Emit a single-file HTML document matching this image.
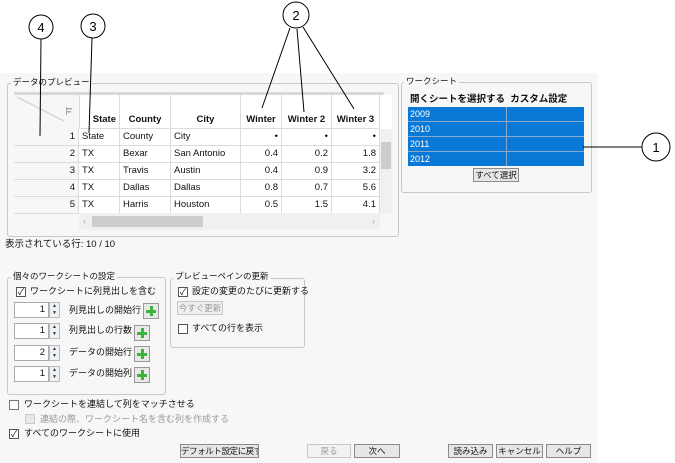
<!DOCTYPE html>
<html><head><meta charset="utf-8">
<style>
*{margin:0;padding:0;box-sizing:border-box}
body{width:675px;height:463px;background:#fff;position:relative;overflow:hidden;font-family:"Liberation Sans","Noto Sans CJK JP",sans-serif;font-size:9px;color:#111}
.a{position:absolute}
.dlg{left:0;top:73px;width:598px;height:390px;background:#f7f7f7}
.grp{position:absolute;border:1px solid #c8c8c8;border-radius:3px}
.lbl{position:absolute;background:#f7f7f7;padding:0 2px;font-size:8.5px;line-height:10px;white-space:nowrap}
.cell{position:absolute;border-right:1px solid #dcdcdc;border-bottom:1px solid #dcdcdc;font-size:9.5px;line-height:16px;padding:0 3px;white-space:nowrap;overflow:hidden}
.hd{font-weight:bold;font-size:9.5px}
.r{text-align:right}
.cb{position:absolute;width:10px;height:10px;border:1px solid #555;background:#fff;font-size:9px;line-height:8px;text-align:center}
.t{position:absolute;font-size:9px;white-space:nowrap;line-height:11px}
.btn{position:absolute;border:1px solid #8a8a8a;background:#e6e6e6;font-size:8.5px;text-align:center;line-height:12px;white-space:nowrap;overflow:hidden}
.spin{position:absolute;width:46px;height:16px}
.spin .in{position:absolute;left:0;top:0;width:35px;height:16px;border:1px solid #aaa;background:#fff;text-align:right;padding-right:3px;font-size:9.5px;line-height:14px}
.spin .ar{position:absolute;left:35px;top:0;width:11px;height:16px;border:1px solid #bbb;background:#eef1f6;font-size:5px;line-height:7px;text-align:center;color:#333}
.plus{position:absolute;width:16px;height:16px;border:1px solid #999;background:#e8e8e8}
.plus:before{content:"";position:absolute;left:6px;top:2px;width:3px;height:10px;background:#3cb43c}
.plus:after{content:"";position:absolute;left:2px;top:6px;width:10px;height:3px;background:#3cb43c}
</style></head><body>
<div class="a dlg"></div>

<div class="grp" style="left:7px;top:83px;width:392px;height:154px"></div>
<div class="lbl" style="left:11px;top:77px">データのプレビュー</div>
<div class="a" style="left:14px;top:92px;width:370px;height:3px;background:#d8d8d8"></div>
<div class="a" style="left:14px;top:95px;width:378px;height:118px;background:#fff"></div>
<div class="a" style="left:14px;top:95px;width:65px;height:118px;background:#f7f7f7"></div>
<svg class="a" style="left:14px;top:95px" width="65" height="34"><line x1="3" y1="2" x2="50" y2="26" stroke="#ccc"/><rect x="52" y="12" width="1" height="8" fill="#aaa"/><rect x="53" y="13" width="5" height="1.5" fill="#aaa"/><rect x="53" y="16" width="4" height="1.5" fill="#aaa"/></svg>
<div class="a" style="left:79px;top:95px;width:1px;height:34px;background:#dcdcdc"></div>
<div class="cell hd" style="left:79px;top:95px;width:41px;height:34px;line-height:50px;text-align:right">State</div>
<div class="cell hd" style="left:120px;top:95px;width:51px;height:34px;line-height:50px;text-align:center">County</div>
<div class="cell hd" style="left:171px;top:95px;width:70px;height:34px;line-height:50px;text-align:center">City</div>
<div class="cell hd" style="left:241px;top:95px;width:41px;height:34px;line-height:50px;padding:0 1px;text-align:center">Winter</div>
<div class="cell hd" style="left:282px;top:95px;width:50px;height:34px;line-height:50px;text-align:center">Winter 2</div>
<div class="cell hd" style="left:332px;top:95px;width:48px;height:34px;line-height:50px;padding:0 1px;text-align:center">Winter 3</div>
<div id="rows"></div>
<script>
var d=[["1","State","County","City","•","•","•"],["2","TX","Bexar","San Antonio","0.4","0.2","1.8"],["3","TX","Travis","Austin","0.4","0.9","3.2"],["4","TX","Dallas","Dallas","0.8","0.7","5.6"],["5","TX","Harris","Houston","0.5","1.5","4.1"]];
var xs=[14,79,120,171,241,282,332,380],h="";
d.forEach(function(r,i){var y=129+i*17;for(var c=0;c<7;c++){var w=xs[c+1]-xs[c];var cls="cell"+((c==0||c>=4)?" r":"");h+='<div class="'+cls+'" style="left:'+xs[c]+'px;top:'+y+'px;width:'+w+'px;height:17px">'+r[c]+'</div>';}});
document.getElementById("rows").innerHTML=h;
</script>
<div class="a" style="left:380px;top:129px;width:12px;height:84px;background:#f0f0f0"></div>
<div class="a" style="left:381px;top:142px;width:10px;height:27px;background:#cdcdcd"></div>
<div class="a" style="left:79px;top:213px;width:301px;height:17px;background:#f0f0f0"></div>
<div class="a" style="left:92px;top:216px;width:111px;height:11px;background:#cdcdcd"></div>
<div class="t" style="left:83px;top:216px;color:#aaa">‹</div>
<div class="t" style="left:372px;top:216px;color:#aaa">›</div>
<div class="t" style="left:5px;top:239px;font-size:9.5px">表示されている行: 10 / 10</div>

<div class="grp" style="left:401px;top:82px;width:191px;height:111px"></div>
<div class="lbl" style="left:404px;top:76px">ワークシート</div>
<div class="t" style="left:410px;top:94px;font-weight:bold;font-size:9.5px">開くシートを選択する&nbsp; カスタム設定</div>
<div class="a" style="left:408px;top:107px;width:176px;height:59px;background:#0a78d7"></div>
<div class="a" style="left:506px;top:107px;width:1px;height:59px;background:#8aa8c8"></div>
<div class="a" style="left:408px;top:121px;width:176px;height:1px;background:#8aa8c8"></div>
<div class="a" style="left:408px;top:136px;width:176px;height:1px;background:#8aa8c8"></div>
<div class="a" style="left:408px;top:151px;width:176px;height:1px;background:#8aa8c8"></div>
<div class="t" style="left:410px;top:109px;color:#fff">2009</div>
<div class="t" style="left:410px;top:124px;color:#fff">2010</div>
<div class="t" style="left:410px;top:139px;color:#fff">2011</div>
<div class="t" style="left:410px;top:154px;color:#fff">2012</div>
<div class="btn" style="left:473px;top:168px;width:46px;height:14px">すべて選択</div>

<div class="grp" style="left:7px;top:277px;width:159px;height:118px"></div>
<div class="lbl" style="left:11px;top:271px">個々のワークシートの設定</div>
<div class="cb" style="left:16px;top:287px">✓</div>
<div class="t" style="left:30px;top:286px">ワークシートに列見出しを含む</div>
<div class="spin" style="left:14px;top:302px"><div class="in">1</div><div class="ar">▲<br>▼</div></div>
<div class="t" style="left:69px;top:305px">列見出しの開始行</div><div class="plus" style="left:143px;top:303px"></div>
<div class="spin" style="left:14px;top:323px"><div class="in">1</div><div class="ar">▲<br>▼</div></div>
<div class="t" style="left:69px;top:325px">列見出しの行数</div><div class="plus" style="left:134px;top:325px"></div>
<div class="spin" style="left:14px;top:345px"><div class="in">2</div><div class="ar">▲<br>▼</div></div>
<div class="t" style="left:69px;top:347px">データの開始行</div><div class="plus" style="left:134px;top:346px"></div>
<div class="spin" style="left:14px;top:366px"><div class="in">1</div><div class="ar">▲<br>▼</div></div>
<div class="t" style="left:69px;top:368px">データの開始列</div><div class="plus" style="left:134px;top:367px"></div>

<div class="grp" style="left:170px;top:278px;width:135px;height:70px"></div>
<div class="lbl" style="left:173px;top:271px">プレビューペインの更新</div>
<div class="cb" style="left:178px;top:287px">✓</div>
<div class="t" style="left:192px;top:286px">設定の変更のたびに更新する</div>
<div class="btn" style="left:177px;top:301px;width:46px;height:14px;color:#999;border-color:#c8c8c8;background:#eee">今すぐ更新</div>
<div class="cb" style="left:178px;top:324px"></div>
<div class="t" style="left:192px;top:323px">すべての行を表示</div>

<div class="cb" style="left:9px;top:400px;border-color:#777"></div>
<div class="t" style="left:24px;top:399px">ワークシートを連結して列をマッチさせる</div>
<div class="cb" style="left:25px;top:414px;border-color:#ccc;background:#e8e8e8"></div>
<div class="t" style="left:40px;top:414px;color:#999">連結の際、ワークシート名を含む列を作成する</div>
<div class="cb" style="left:9px;top:429px">✓</div>
<div class="t" style="left:24px;top:428px">すべてのワークシートに使用</div>

<div class="btn" style="left:180px;top:444px;width:79px;height:14px;letter-spacing:-0.4px;padding:0">デフォルト設定に戻す</div>
<div class="btn" style="left:307px;top:444px;width:44px;height:14px;color:#999;border-color:#c8c8c8;background:#f2f2f2">戻る</div>
<div class="btn" style="left:354px;top:444px;width:46px;height:14px">次へ</div>
<div class="btn" style="left:448px;top:444px;width:45px;height:14px">読み込み</div>
<div class="btn" style="left:496px;top:444px;width:47px;height:14px">キャンセル</div>
<div class="btn" style="left:546px;top:444px;width:45px;height:14px">ヘルプ</div>

<svg class="a" style="left:0;top:0" width="675" height="463">
<g fill="#fff" stroke="#000" stroke-width="1">
<circle cx="41" cy="27" r="12"/>
<circle cx="93" cy="26" r="12"/>
<circle cx="296" cy="15" r="13"/>
<circle cx="656" cy="147" r="14"/>
</g>
<g stroke="#000" stroke-width="1" fill="none">
<line x1="41" y1="39" x2="40" y2="136"/>
<line x1="92" y1="38" x2="89" y2="133"/>
<line x1="290" y1="28" x2="262" y2="108"/>
<line x1="297" y1="29" x2="304" y2="112"/>
<line x1="303" y1="27" x2="354" y2="109"/>
<line x1="583" y1="147" x2="642" y2="147"/>
</g>
<g font-family="Liberation Sans, sans-serif" font-size="13" text-anchor="middle">
<text x="41" y="32">4</text><text x="93" y="31">3</text><text x="296" y="20">2</text><text x="656" y="152">1</text>
</g>
</svg>
</body></html>
